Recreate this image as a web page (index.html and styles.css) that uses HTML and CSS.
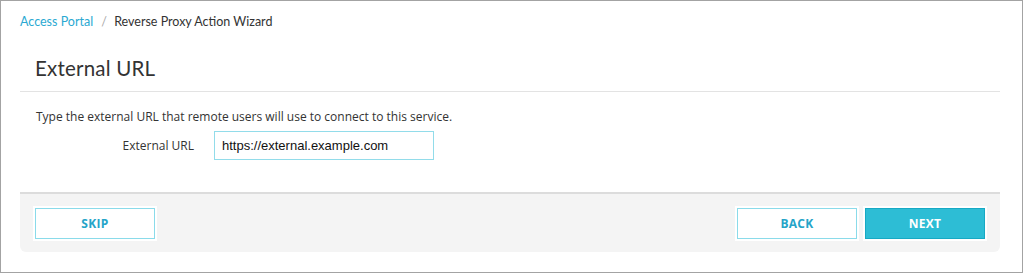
FILE: index.html
```html
<!DOCTYPE html>
<html>
<head>
<meta charset="utf-8">
<link rel="stylesheet" href="styles.css">
</head>
<body>
<div class="frame">
  <nav class="crumbs">
    <a class="crumb-link">Access Portal</a>
    <span class="crumb-sep">/</span>
    <span class="crumb-current">Reverse Proxy Action Wizard</span>
  </nav>
  <div class="panel">
    <h1 class="title">External URL</h1>
    <div class="body">
      <p class="desc">Type the external URL that remote users will use to connect to this service.</p>
      <div class="field">
        <label class="field-label">External URL</label>
        <input class="field-input" type="text" value="https://external.example.com">
      </div>
    </div>
    <div class="footer">
      <button class="btn btn-outline">SKIP</button>
      <div class="footer-right">
        <button class="btn btn-outline">BACK</button>
        <button class="btn btn-primary">NEXT</button>
      </div>
    </div>
  </div>
</div>
</body>
</html>
```
FILE: styles.css
```css
html, body {
  margin: 0;
  padding: 0;
  background: #fff;
}
.frame {
  width: 1023px;
  height: 273px;
  box-sizing: border-box;
  border: 1px solid #a3a3a3;
  padding: 0 22px 0 19px;
  font-family: "Open Sans", "Noto Sans", sans-serif;
  color: #333;
}
.crumbs {
  height: 43px;
  padding-top: 12px;
  box-sizing: border-box;
  font-family: "Lato", "Open Sans", sans-serif;
  font-size: 12.5px;
  line-height: 18px;
}
.crumb-link {
  color: #2aa9d2;
}
.crumb-sep {
  color: #aaa;
  margin: 0 4px 0 5px;
}
.crumb-current {
  color: #333;
}
.panel {
  display: flex;
  flex-direction: column;
}
.title {
  margin: 0;
  padding: 12px 0 0 15px;
  height: 48px;
  box-sizing: border-box;
  font-family: "Lato", sans-serif;
  font-weight: 400;
  font-size: 20.5px;
  letter-spacing: 0.2px;
  line-height: 24px;
  color: #333;
  border-bottom: 1px solid #e3e3e3;
}
.body {
  padding: 16px 0 0 16px;
  height: 100px;
  box-sizing: border-box;
}
.desc {
  margin: 0;
  font-size: 12px;
  line-height: 17px;
  color: #333;
}
.field {
  display: flex;
  align-items: center;
  margin-top: 6px;
}
.field-label {
  width: 158px;
  text-align: right;
  font-size: 12px;
  color: #333;
  margin-right: 20px;
}
.field-input {
  width: 220px;
  height: 29px;
  box-sizing: border-box;
  border: 1px solid #92dcea;
  padding: 0 7px;
  font-family: "Liberation Sans", Arial, sans-serif;
  font-size: 13px;
  color: #111;
  outline: none;
}
.footer {
  height: 60px;
  box-sizing: border-box;
  background: #f4f4f4;
  border-top: 2px solid #dcdcdc;
  border-radius: 0 0 6px 6px;
  display: flex;
  align-items: center;
  justify-content: space-between;
  padding: 0 15px;
}
.footer-right {
  display: flex;
  gap: 8px;
}
.btn {
  width: 120px;
  height: 31px;
  box-sizing: border-box;
  font-family: "Open Sans", sans-serif;
  font-weight: 700;
  font-size: 12px;
  letter-spacing: 0.3px;
  cursor: pointer;
  box-shadow: 0 0 0 2px #fff;
  padding: 0;
}
.btn-outline {
  background: #fff;
  border: 1px solid #8adbea;
  color: #25a4c8;
}
.btn-primary {
  background: #2dbdd5;
  border: 1px solid #17a9c4;
  color: #fff;
}
```
